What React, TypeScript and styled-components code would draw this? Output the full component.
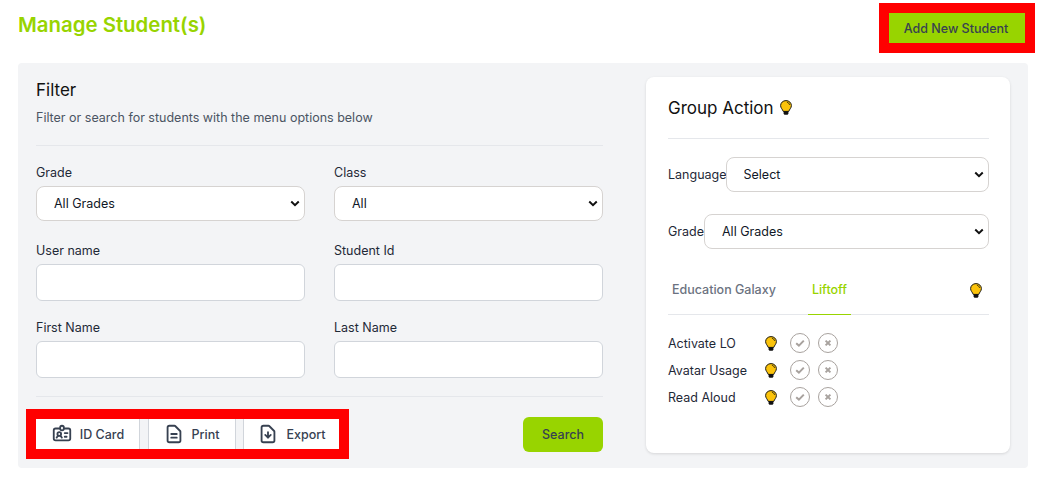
import { createGlobalStyle, styled } from 'styled-components';
import {
  HiOutlineIdentification,
  HiOutlineDocumentText,
  HiOutlineDocumentDownload,
} from 'react-icons/hi';

const chevron =
  "url(\"data:image/svg+xml,%3Csvg xmlns='http://www.w3.org/2000/svg' viewBox='0 0 12 8'%3E%3Cpath d='M1.5 1.6 6 6l4.5-4.4' fill='none' stroke='%23111' stroke-width='2.4'/%3E%3C/svg%3E\")";

const Bulb = () => (
  <svg width="12" height="15" viewBox="0 0 20 25">
    <path
      d="M10 1C4.8 1 1 4.8 1 9.3c0 4 3.2 6.2 4.4 9.7h9.2c1.2-3.5 4.4-5.7 4.4-9.7C19 4.8 15.2 1 10 1z"
      fill="#fbc30b"
      stroke="#111"
      strokeWidth="1.6"
    />
    <path d="M11.5 3.8c2.4.4 4.1 2.1 4.4 4.4" fill="none" stroke="#111" strokeWidth="1.3" />
    <path d="M6 18.6h8v4.2l-1.4 1.8H7.4L6 22.8z" fill="#111" />
  </svg>
);

const Check = () => (
  <svg width="10" height="10" viewBox="0 0 10 10">
    <path d="M1.2 5.2 3.9 7.6 8.8 2.6" fill="none" stroke="#a8a29e" strokeWidth="2" />
  </svg>
);

const Cross = () => (
  <svg width="10" height="10" viewBox="0 0 10 10">
    <path d="M2.6 2.6l4.8 4.8m0-4.8L2.6 7.4" fill="none" stroke="#a8a29e" strokeWidth="2" />
  </svg>
);

const App = () => {
  return (
    <StyledPage>
      <GlobalStyle />
      <StyledHeader>
        <h1>Manage Student(s)</h1>
        <StyledAddButton>Add New Student</StyledAddButton>
      </StyledHeader>
      <StyledPanel>
        <StyledFilter>
          <h2>Filter</h2>
          <p>Filter or search for students with the menu options below</p>
          <StyledFields>
            <StyledField>
              <label>Grade</label>
              <select>
                <option>All Grades</option>
              </select>
            </StyledField>
            <StyledField>
              <label>Class</label>
              <select>
                <option>All</option>
              </select>
            </StyledField>
            <StyledField>
              <label>User name</label>
              <input />
            </StyledField>
            <StyledField>
              <label>Student Id</label>
              <input />
            </StyledField>
            <StyledField>
              <label>First Name</label>
              <input />
            </StyledField>
            <StyledField>
              <label>Last Name</label>
              <input />
            </StyledField>
          </StyledFields>
          <StyledFilterFooter>
            <StyledToolbar>
              <StyledToolButton $width={104}>
                <HiOutlineIdentification size={22} />
                ID Card
              </StyledToolButton>
              <StyledToolButton $width={88}>
                <HiOutlineDocumentText size={22} />
                Print
              </StyledToolButton>
              <StyledToolButton $width={96}>
                <HiOutlineDocumentDownload size={22} />
                Export
              </StyledToolButton>
            </StyledToolbar>
            <StyledSearchButton>Search</StyledSearchButton>
          </StyledFilterFooter>
        </StyledFilter>
        <StyledCard>
          <StyledCardTitle>
            Group Action <Bulb />
          </StyledCardTitle>
          <StyledInlineField $labelGap={-1}>
            <label>Language</label>
            <select>
              <option>Select</option>
            </select>
          </StyledInlineField>
          <StyledInlineField>
            <label>Grade</label>
            <select>
              <option>All Grades</option>
            </select>
          </StyledInlineField>
          <StyledTabs>
            <StyledTab>Education Galaxy</StyledTab>
            <StyledTab $active>Liftoff</StyledTab>
            <StyledTabBulb>
              <Bulb />
            </StyledTabBulb>
          </StyledTabs>
          <StyledActions>
            {['Activate LO', 'Avatar Usage', 'Read Aloud'].map((name) => (
              <StyledActionRow key={name}>
                <span>{name}</span>
                <Bulb />
                <StyledRoundButton>
                  <Check />
                </StyledRoundButton>
                <StyledRoundButton>
                  <Cross />
                </StyledRoundButton>
              </StyledActionRow>
            ))}
          </StyledActions>
        </StyledCard>
      </StyledPanel>
    </StyledPage>
  );
};

export default App;

const GlobalStyle = createGlobalStyle`
  * {
    box-sizing: border-box;
  }
  body {
    margin: 0;
    background: #fff;
    font-family: Inter, "Liberation Sans", sans-serif;
  }
  select {
    width: 100%;
    padding: 0 24px 0 17px;
    border: 1px solid #d6d3d1;
    border-radius: 8px;
    background: #fff ${chevron} no-repeat right 4px center / 10px 7px;
    color: #111827;
    font: 400 12.5px Inter, "Liberation Sans", sans-serif;
    appearance: none;
  }
`;

const StyledPage = styled.div`
  padding: 3px 4px 14px 18px;
`;
const StyledHeader = styled.div`
  display: flex;
  justify-content: space-between;
  align-items: flex-start;

  & > h1 {
    margin: 7px 0 0;
    color: #98d400;
    font-size: 20.4px;
    line-height: 30px;
    font-weight: 600;
  }
`;
const StyledAddButton = styled.button`
  width: 156px;
  height: 50px;
  padding: 0 2px 0 0;
  border: 10px solid #ff0000;
  background: #98d400;
  color: #374151;
  font: 500 12.5px Inter, "Liberation Sans", sans-serif;
`;
const StyledPanel = styled.div`
  display: flex;
  justify-content: space-between;
  align-items: flex-start;

  width: 1010px;
  height: 405px;
  margin-top: 10px;
  padding: 14px 18px 0;

  border-radius: 4px;
  background: #f3f4f6;
`;
const StyledFilter = styled.div`
  width: 567px;

  & > h2 {
    margin: 0;
    color: #111;
    font-size: 17px;
    line-height: 26px;
    font-weight: 400;
  }
  & > p {
    margin: 5px 0 0;
    padding-bottom: 17px;
    border-bottom: 1px solid #e5e7eb;
    color: #4b5563;
    font-size: 12.5px;
    line-height: 20px;
  }
`;
const StyledFields = styled.div`
  display: grid;
  grid-template-columns: 269px 269px;
  grid-template-rows: 78px 77px auto;
  column-gap: 29px;

  padding: 19px 0 18px;
  border-bottom: 1px solid #e5e7eb;
`;
const StyledField = styled.div`
  display: flex;
  flex-direction: column;

  & > label {
    margin-bottom: 5px;
    color: #1f2937;
    font-size: 12.5px;
    line-height: 16px;
  }
  & > input {
    height: 37px;
    border: 1px solid #d1d5db;
    border-radius: 6px;
    background: #fff;
  }
  & > select {
    height: 35px;
  }
`;
const StyledFilterFooter = styled.div`
  display: flex;
  justify-content: space-between;
  align-items: center;

  margin: 12px 0 0 -10px;
`;
const StyledToolbar = styled.div`
  display: flex;
  gap: 7px;

  border: 10px solid #ff0000;
  background: #f3f4f6;
`;
const StyledToolButton = styled.button<{ $width: number }>`
  display: flex;
  justify-content: center;
  align-items: center;
  gap: 7px;

  width: ${(p) => p.$width}px;
  height: 30px;
  padding: 0;

  border: 0;
  background: #fff;
  color: #374151;
  font: 500 12.5px Inter, "Liberation Sans", sans-serif;

  &:first-child {
    margin-right: 1px;
  }
  &:nth-child(2) {
    padding-right: 2px;
  }
  &:not(:first-child) {
    border-left: 1px solid #d1d5db;
  }
  &:not(:last-child) {
    border-right: 1px solid #d1d5db;
  }
`;
const StyledSearchButton = styled.button`
  width: 80px;
  height: 35px;
  border: 0;
  border-radius: 6px;
  background: #98d400;
  color: #374151;
  font: 500 12.5px Inter, "Liberation Sans", sans-serif;
`;
const StyledCard = styled.div`
  width: 364px;
  height: 376px;
  padding: 0 21px 0 22px;

  border-radius: 8px;
  background: #fff;
  box-shadow: 0 1px 3px rgba(0, 0, 0, 0.12);
`;
const StyledCardTitle = styled.h2`
  display: flex;
  align-items: center;
  gap: 6px;

  height: 62px;
  margin: 0 0 18px;
  border-bottom: 1px solid #e5e7eb;

  color: #111;
  font-size: 17px;
  font-weight: 400;
`;
const StyledInlineField = styled.div<{ $labelGap?: number }>`
  display: flex;
  align-items: center;

  height: 35px;
  margin-bottom: 22px;

  & > label {
    margin-right: ${(p) => p.$labelGap ?? 0}px;
    color: #1f2937;
    font-size: 12.5px;
    white-space: nowrap;
  }
  & > select {
    flex: 1;
    height: 35px;
  }
`;
const StyledTabs = styled.div`
  display: flex;
  align-items: stretch;

  height: 44px;
  margin-top: 8px;
  border-bottom: 1px solid #e5e7eb;
`;
const StyledTab = styled.div<{ $active?: boolean }>`
  margin-bottom: -1px;
  padding: 11px 4px 0;
  margin-right: ${(p) => (p.$active ? 0 : 28)}px;

  border-bottom: 1px solid ${(p) => (p.$active ? '#98d400' : 'transparent')};
  color: ${(p) => (p.$active ? '#98d400' : '#6b7280')};
  font-size: 12.5px;
  font-weight: 500;
`;
const StyledTabBulb = styled.div`
  margin-left: auto;
  padding: 11px 7px 0 0;
`;
const StyledActions = styled.div`
  display: flex;
  flex-direction: column;
  gap: 7px;

  margin-top: 18px;
`;
const StyledActionRow = styled.div`
  display: flex;
  align-items: center;
  gap: 8px;

  height: 20px;

  & > span {
    width: 89px;
    color: #1f2937;
    font-size: 12.5px;
  }
  & > svg {
    margin-right: 5px;
  }
`;
const StyledRoundButton = styled.button`
  display: flex;
  justify-content: center;
  align-items: center;

  width: 20px;
  height: 20px;
  padding: 0;

  border: 1px solid #a8a29e;
  border-radius: 50%;
  background: #fff;
`;
